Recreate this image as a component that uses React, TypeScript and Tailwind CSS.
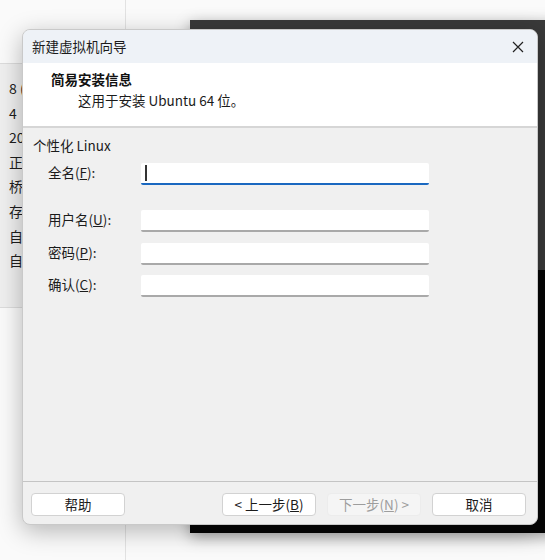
import React from 'react';

const font = { fontFamily: '"Noto Sans CJK SC", "Noto Sans", sans-serif' };

function Field({ label, mnemonic, focused, className }: { label: string; mnemonic: string; focused?: boolean; className?: string }) {
  return (
    <div className={`flex items-center ${className ?? ''}`}>
      <div className="w-[118px] pl-[25px] -mt-[4px] text-[13.5px] text-[#1b1b1b] whitespace-nowrap">
        {label}(<u>{mnemonic}</u>):
      </div>
      <div
        className={`relative h-[22px] w-[288px] bg-white rounded-[2px] border-b-2 ${
          focused ? 'border-[#1a68c0]' : 'border-[#a9a9a9]'
        }`}
      >
        {focused && <div className="absolute left-[4px] top-[2px] h-[16px] w-[2px] bg-[#333]" />}
      </div>
    </div>
  );
}

function Button({ children, disabled }: { children: React.ReactNode; disabled?: boolean }) {
  return (
    <button
      className={`h-[23px] w-[94px] rounded-[4px] border text-[13.5px] leading-none ${
        disabled
          ? 'bg-[#f5f5f5] border-[#ececec] text-[#9d9d9d]'
          : 'bg-white border-[#d2d2d2] text-[#1b1b1b]'
      }`}
    >
      {children}
    </button>
  );
}

export default function App() {
  return (
    <div className="relative w-[545px] h-[560px] overflow-hidden bg-[#fafafa]" style={font}>
      {/* background application */}
      <div className="absolute left-[125px] top-0 h-full w-px bg-[#e2e2e2]" />
      <div className="absolute left-0 top-[63px] w-[125px] h-px bg-[#dcdcdc]" />
      <div className="absolute left-0 top-[307px] w-[125px] h-px bg-[#dcdcdc]" />
      <div className="absolute left-0 top-[64px] w-[24px] h-[243px] bg-[#efefef]" />
      <div className="absolute left-[9px] top-[78px] flex flex-col gap-[4px] text-[14px] leading-[20.6px] text-[#1e1e1e]">
        <span>8 (</span>
        <span>4</span>
        <span>20</span>
        <span>正</span>
        <span>桥</span>
        <span>存</span>
        <span>自</span>
        <span>自</span>
      </div>

      {/* dark window behind */}
      <div className="absolute left-[190px] top-[20px] w-[400px] h-[513px] flex flex-col shadow-[0_4px_14px_rgba(0,0,0,0.35)]">
        <div className="h-[250px] bg-[#3a3a3a]" />
        <div className="flex-1 bg-[#050505]" />
      </div>

      {/* wizard dialog */}
      <div className="absolute left-[22px] top-[29px] w-[516px] h-[496px] flex flex-col rounded-[8px] overflow-hidden border border-[#c9c9c9] bg-[#f0f0f0] shadow-[0_6px_24px_rgba(0,0,0,0.28)]">
        <div className="h-[33px] shrink-0 flex items-center justify-between bg-[#eef2f7] pl-[9px] pr-[13px]">
          <span className="text-[13.5px] text-[#1b1b1b]">新建虚拟机向导</span>
          <svg width="12" height="12" viewBox="0 0 12 12" className="text-[#222]">
            <path d="M1 1 L11 11 M11 1 L1 11" stroke="currentColor" strokeWidth="1.2" fill="none" />
          </svg>
        </div>
        <div className="h-[65px] shrink-0 bg-white border-b-2 border-[#d6d6d6] pl-[28px] pt-[7px]">
          <div className="text-[13.5px] font-bold text-[#111] leading-[18px]">简易安装信息</div>
          <div className="mt-[3px] pl-[27px] text-[13.5px] text-[#1b1b1b] leading-[18px]">这用于安装 Ubuntu 64 位。</div>
        </div>
        <div className="flex-1 flex flex-col">
          <div className="pl-[10px] pt-[8px] text-[13.5px] text-[#1b1b1b] leading-[18px]">个性化 Linux</div>
          <Field label="全名" mnemonic="F" focused className="mt-[9px]" />
          <Field label="用户名" mnemonic="U" className="mt-[25px]" />
          <Field label="密码" mnemonic="P" className="mt-[11px]" />
          <Field label="确认" mnemonic="C" className="mt-[10px]" />
        </div>
        <div className="h-[43px] shrink-0 border-t border-[#c4c4c4] flex items-start pt-[11px] pl-[8px] pr-[11px]">
          <Button>帮助</Button>
          <div className="flex-1" />
          <div className="flex gap-[11px]">
            <Button>
              &lt; 上一步(<u>B</u>)
            </Button>
            <Button disabled>
              下一步(<u>N</u>) &gt;
            </Button>
            <Button>取消</Button>
          </div>
        </div>
      </div>
    </div>
  );
}
